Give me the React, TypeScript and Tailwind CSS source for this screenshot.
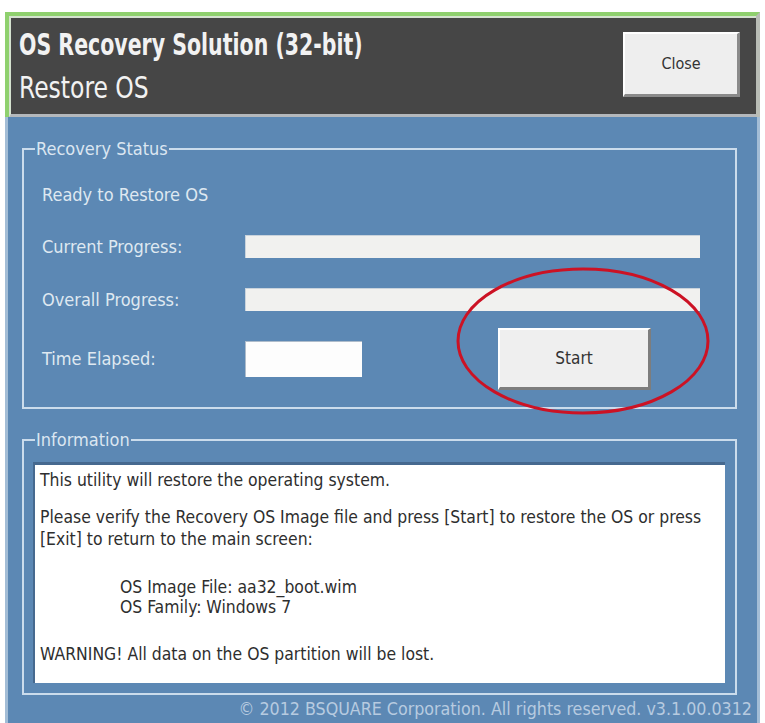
import { FC } from 'react';

const uiFont = '[font-family:"DejaVu_Sans_Condensed","DejaVu_Sans",sans-serif]';

// Etched group box with a caption sitting on its top edge
const GroupBox: FC<{ title: string; className?: string; children: React.ReactNode }> = ({
  title,
  className = '',
  children,
}) => (
  <fieldset className="border-2 border-[#cbdcec]">
    <legend className="ml-[11px] px-[1px] text-[18px] leading-[22px] text-[#dbe6f1]">{title}</legend>
    <div className={className}>{children}</div>
  </fieldset>
);

const Bar: FC<{ className?: string }> = ({ className = '' }) => (
  <div className={`border-t border-l border-[#c9d3dc] bg-[#f1f1ef] ${className}`} />
);

const labelCls = 'w-[203px] text-[18px] leading-[22px] text-[#dfe8f1]';

export default function App() {
  return (
    <div className={`relative h-[723px] w-[765px] overflow-hidden bg-white ${uiFont}`}>
      <div className="ml-[5px] mt-[12px] flex h-[711px] w-[755px] flex-col">
        {/* title strip */}
        <div className="border-t-[4px] border-l-[4px] border-r-[4px] border-t-[#8fd06e] border-l-[#8fd06e] border-r-[#b9bdb6]">
          <div className="flex h-[101px] items-start justify-between border-t-2 border-l-2 border-[#d5e2cf] border-b-[3px] border-b-[#b4b8bc] bg-[#464646] pl-[8px] pr-[16px]">
            <div className="flex-1 pt-[10px] text-[#f2f2f2]">
              <div className="origin-left scale-x-[0.76] text-[30px] font-bold leading-[34px]">OS Recovery Solution (32-bit)</div>
              <div className="mt-[9px] origin-left scale-x-[0.87] text-[30px] leading-[34px]">Restore OS</div>
            </div>
            <button className="mt-[14px] flex h-[65px] w-[117px] items-center justify-center border-t-2 border-l-2 border-r-[3px] border-b-[3px] border-t-white border-l-white border-r-[#8a8a8a] border-b-[#8a8a8a] bg-[#eeeeee] text-[16px] text-[#333]">
              Close
            </button>
          </div>
        </div>

        {/* blue dialog body */}
        <div className="flex flex-1 flex-col border-l-[3px] border-r-[3px] border-[#a3bdd6] bg-[#5c88b4] pl-[14px] pr-[20px] pt-[21px]">
          <GroupBox title="Recovery Status" className="pb-[17px] pl-[18px] pr-[35px]">
            <div className="mt-[24px] text-[18px] leading-[22px] text-[#dfe8f1]">Ready to Restore OS</div>
            <div className="mt-[29px] flex items-center">
              <span className={labelCls}>Current Progress:</span>
              <Bar className="h-[23px] flex-1" />
            </div>
            <div className="mt-[30px] flex items-center">
              <span className={labelCls}>Overall Progress:</span>
              <Bar className="h-[23px] flex-1" />
            </div>
            <div className="mt-[17px] flex items-center">
              <span className={labelCls}>Time Elapsed:</span>
              <div className="h-[36px] w-[117px] border-t border-l border-[#aebccb] bg-[#fdfdfd]" />
              <button className="ml-[136px] flex h-[62px] w-[153px] items-center justify-center border-t-2 border-l-2 border-r-[3px] border-b-[3px] border-t-white border-l-white border-r-[#7d7d7d] border-b-[#7d7d7d] bg-[#efefef] text-[17px] text-[#333]">
                Start
              </button>
            </div>
          </GroupBox>

          <div className="mt-[20px]">
            <GroupBox title="Information" className="pb-[10px] pl-[9px] pr-[10px]">
              <div className="mt-[11px] h-[221px] overflow-hidden whitespace-nowrap border-t-[3px] border-l-2 border-[#46698f] bg-white px-[5px] text-[17.4px] leading-[22px] text-[#2e2e2e]">
                <p className="pt-[4px]">This utility will restore the operating system.</p>
                <p className="mt-[15px]">
                  Please verify the Recovery OS Image file and press [Start] to restore the OS or press
                  <br />
                  [Exit] to return to the main screen:
                </p>
                <p className="mt-[27px] pl-[80px] leading-[20px]">
                  OS Image File: aa32_boot.wim
                  <br />
                  OS Family: Windows 7
                </p>
                <p className="mt-[26px]">WARNING! All data on the OS partition will be lost.</p>
              </div>
            </GroupBox>
          </div>

          <div className="-mr-[15px] mt-auto pb-[3px] text-right text-[17.7px] leading-[22px] text-[#b7cbe0]">
            © 2012 BSQUARE Corporation. All rights reserved. v3.1.00.0312
          </div>
        </div>
      </div>

      {/* red highlight ring around Start */}
      <svg className="pointer-events-none absolute left-[455px] top-[265px]" width="256" height="152" viewBox="0 0 256 152">
        <ellipse cx="128" cy="76" rx="125" ry="72" fill="none" stroke="#cc1224" strokeWidth="3" />
      </svg>
    </div>
  );
}
